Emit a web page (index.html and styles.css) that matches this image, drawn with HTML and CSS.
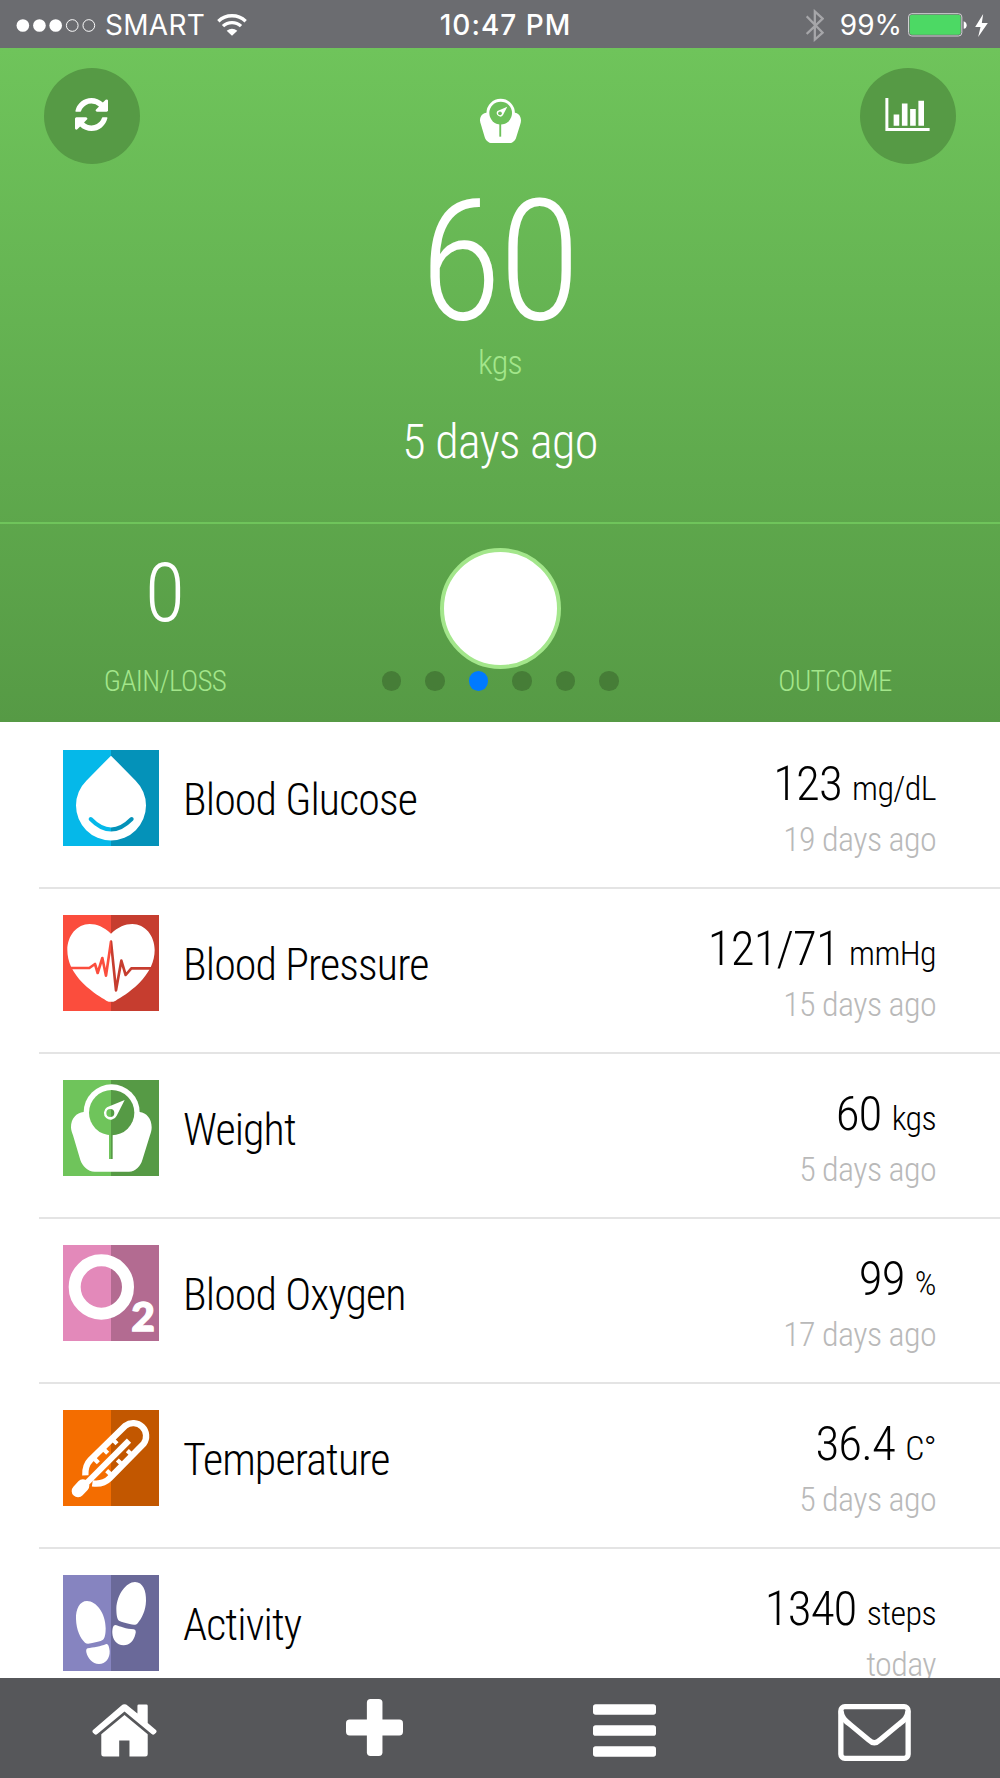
FILE: index.html
```html
<!DOCTYPE html>
<html lang="en">
<head>
    <meta charset="UTF-8">
    <meta name="viewport" content="width=device-width, initial-scale=1.0">
    <title>Health Dashboard</title>
    <link rel="stylesheet" href="styles.css">
</head>
<body>
    <!-- Status bar -->
    <div class="status-bar">
        <div class="status-left">
            <svg class="signal" viewBox="0 0 244 40">
                <g fill="#fff"><circle cx="20" cy="20" r="19.5"/><circle cx="71" cy="20" r="19.5"/><circle cx="121" cy="20" r="19.5"/></g>
                <g fill="none" stroke="#fff" stroke-width="3"><circle cx="172" cy="20" r="18"/><circle cx="223" cy="20" r="18"/></g>
            </svg>
            <span class="carrier">SMART</span>
            <svg class="wifi" viewBox="0 0 90 65">
                <g fill="none" stroke="#fff" stroke-width="10">
                    <path d="M4 21A60 60 0 0 1 86 21"/>
                    <path d="M18 36A39 39 0 0 1 72 36"/>
                </g>
                <path d="M45 65L29 50Q45 38 61 50Z" fill="#fff"/>
            </svg>
        </div>
        <div class="clock">10:47 PM</div>
        <div class="status-right">
            <svg class="bluetooth" viewBox="0 0 55 98"><path d="M2 21L51 71L27 92V6L51 28L2 75" fill="none" stroke="#a6a6a9" stroke-width="7"/></svg>
            <span class="charge">99%</span>
            <svg class="battery" viewBox="0 0 177 71">
                <rect x="1.5" y="1.5" width="160" height="67" rx="10" fill="none" stroke="#d0d0d2" stroke-width="3"/>
                <rect x="5" y="5" width="153" height="60" rx="7" fill="#4cd964"/>
                <path d="M167 24Q176 27 176 36T167 47Z" fill="#fff"/>
            </svg>
            <svg class="bolt" viewBox="0 0 38 69"><path d="M24 0L0 39H16L9 69L38 27H20Z" fill="#fff"/></svg>
        </div>
    </div>

    <!-- Current reading -->
    <div class="hero">
        <div class="hero-main">
            <button class="round-button">
                <svg class="refresh" viewBox="0 0 1536 1536"><path fill="#fff" d="M1511 928q0 5-1 7-64 268-268 434.5t-478 166.5q-146 0-282.5-55t-243.5-157l-129 129q-19 19-45 19t-45-19-19-45v-448q0-26 19-45t45-19h448q26 0 45 19t19 45-19 45l-137 137q71 66 161 102t187 36q134 0 250-65t186-179q11-17 53-117 8-23 30-23h192q13 0 22.5 9.5t9.5 22.5zm25-800v448q0 26-19 45t-45 19h-448q-26 0-45-19t-19-45 19-45l138-138q-148-137-349-137-134 0-250 65t-186 179q-11 17-53 117-8 23-30 23h-199q-13 0-22.5-9.5t-9.5-22.5v-7q65-268 270-434.5t480-166.5q146 0 284 55.5t245 156.5l130-129q19-19 45-19t45 19 19 45z"/></svg>
            </button>
            <div class="reading">
                <svg class="scale" viewBox="24 13 242 263">
                    <path fill="#fff" d="M62 96C40 98 24 116 24 142C24 150 27 158 30 166L52 240C58 258 74 275 95 275H198C218 275 233 258 238 240L261 166C264 158 266 150 266 142C266 116 250 98 230 96Z"/>
                    <circle cx="146" cy="97" r="84" fill="#fff"/>
                    <circle cx="146" cy="98" r="67" fill="#6dc05a"/>
                    <path fill="#6dc05a" d="M138 160h11v77h-11z"/>
                    <path fill="#fff" d="M185 60L127 86A20 20 0 1 0 160 109Z"/>
                    <circle cx="142" cy="99" r="11" fill="#6dc05a"/>
                </svg>
                <div class="reading-value">60</div>
                <div class="reading-unit">kgs</div>
                <div class="reading-date">5 days ago</div>
            </div>
            <button class="round-button">
                <svg class="chart" viewBox="0 0 134 100"><path fill="#fff" d="M0 0h9v91h125v9H0zM25 50h17v34H25zM50 17h17v67H50zM75 33h17v51H75zM100 8h17v76h-17z"/></svg>
            </button>
        </div>
        <div class="hero-stats">
            <div class="stat">
                <div class="stat-value">0</div>
                <div class="stat-label">GAIN/LOSS</div>
            </div>
            <div class="stat-center">
                <div class="knob"></div>
                <div class="dots">
                    <span class="dot"></span>
                    <span class="dot"></span>
                    <span class="dot active"></span>
                    <span class="dot"></span>
                    <span class="dot"></span>
                    <span class="dot"></span>
                </div>
            </div>
            <div class="stat">
                <div class="stat-value"></div>
                <div class="stat-label">OUTCOME</div>
            </div>
        </div>
    </div>

    <!-- Measurements -->
    <div class="list">
        <div class="row">
            <svg class="row-icon" viewBox="0 0 288 288">
                <linearGradient id="blue" gradientUnits="userSpaceOnUse" x1="0" x2="288" y1="0" y2="0"><stop offset=".5" stop-color="#05b8e9"/><stop offset=".5" stop-color="#0492b9"/></linearGradient>
                <rect width="288" height="288" fill="url(#blue)"/>
                <path fill="#fff" d="M144 17L218 92A105 105 0 1 1 70 92Z"/>
                <path fill="none" stroke="url(#blue)" stroke-width="12" stroke-linecap="round" d="M83 207Q144 270 206 207"/>
            </svg>
            <div class="row-name">Blood Glucose</div>
            <div class="row-data">
                <div class="row-value">123 <span class="unit">mg/dL</span></div>
                <div class="row-date">19 days ago</div>
            </div>
        </div>
        <div class="row">
            <svg class="row-icon" viewBox="0 0 288 288">
                <linearGradient id="red" gradientUnits="userSpaceOnUse" x1="0" x2="288" y1="0" y2="0"><stop offset=".5" stop-color="#fb4d3d"/><stop offset=".5" stop-color="#c63d2f"/></linearGradient>
                <rect width="288" height="288" fill="url(#red)"/>
                <path fill="#fff" d="M144 56C122 36 102 27 80 27C42 27 13 62 13 105C13 140 28 172 60 205C90 234 115 248 130 257Q144 264 158 257C173 248 198 234 228 205C260 172 275 140 275 105C275 62 246 27 208 27C186 27 166 36 144 56Z"/>
                <path fill="none" stroke="url(#red)" stroke-width="8" stroke-linejoin="round" d="M22 159H79L96 147L104 174L118 129L129 182L144 80L159 226L175 137L188 180L205 160H264"/>
            </svg>
            <div class="row-name">Blood Pressure</div>
            <div class="row-data">
                <div class="row-value">121/71 <span class="unit">mmHg</span></div>
                <div class="row-date">15 days ago</div>
            </div>
        </div>
        <div class="row">
            <svg class="row-icon" viewBox="0 0 288 288">
                <linearGradient id="green" gradientUnits="userSpaceOnUse" x1="0" x2="288" y1="0" y2="0"><stop offset=".5" stop-color="#6fc45b"/><stop offset=".5" stop-color="#569a45"/></linearGradient>
                <rect width="288" height="288" fill="url(#green)"/>
                <path fill="#fff" d="M62 96C40 98 24 116 24 142C24 150 27 158 30 166L52 240C58 258 74 275 95 275H198C218 275 233 258 238 240L261 166C264 158 266 150 266 142C266 116 250 98 230 96Z"/>
                <circle cx="146" cy="97" r="84" fill="#fff"/>
                <circle cx="146" cy="98" r="68" fill="url(#green)"/>
                <path fill="url(#green)" d="M138 160h11v77h-11z"/>
                <path fill="#fff" d="M185 60L132 82A20 20 0 1 0 161 107Z"/>
                <circle cx="142" cy="99" r="12" fill="url(#green)"/>
            </svg>
            <div class="row-name">Weight</div>
            <div class="row-data">
                <div class="row-value">60 <span class="unit">kgs</span></div>
                <div class="row-date">5 days ago</div>
            </div>
        </div>
        <div class="row">
            <svg class="row-icon" viewBox="0 0 288 288">
                <path fill="#e389ba" d="M0 0h144v288H0z"/>
                <path fill="#b36b91" d="M144 0h144v288H144z"/>
                <circle cx="115" cy="126" r="80" fill="none" stroke="#fff" stroke-width="36"/>
                <text class="o2-digit" x="205" y="259">2</text>
            </svg>
            <div class="row-name">Blood Oxygen</div>
            <div class="row-data">
                <div class="row-value">99 <span class="unit">%</span></div>
                <div class="row-date">17 days ago</div>
            </div>
        </div>
        <div class="row">
            <svg class="row-icon" viewBox="0 0 288 288">
                <path fill="#f46d00" d="M0 0h144v288H0z"/>
                <path fill="#c25700" d="M144 0h144v288H144z"/>
                <g fill="none" stroke="#fff">
                    <path stroke-width="19" d="M67 196C66 172 72 160 82 150L187 47A39 39 0 0 1 242 101L140 205C125 220 108 223 88 220"/>
                    <path stroke-width="13" d="M91 143L106 158M119 115L134 130M147 86L162 101M147 197L131 182M179 165L163 150M209 137L193 122"/>
                    <path stroke-width="18" d="M50 240L198 92"/>
                    <path stroke-width="38" stroke-linecap="round" d="M45 243L60 227"/>
                </g>
            </svg>
            <div class="row-name">Temperature</div>
            <div class="row-data">
                <div class="row-value">36.4 <span class="unit">C°</span></div>
                <div class="row-date">5 days ago</div>
            </div>
        </div>
        <div class="row">
            <svg class="row-icon" viewBox="0 0 288 288">
                <path fill="#8684c0" d="M0 0h144v288H0z"/>
                <path fill="#6a6999" d="M144 0h144v288H144z"/>
                <g fill="#fff">
                    <path d="M72 78C50 78 38 102 39 132C40 165 52 190 66 203C70 207 76 207 84 205C98 201 112 200 120 194C126 190 128 175 128 160C128 115 100 78 72 78Z"/>
                    <path d="M74 220C90 218 115 214 128 208C135 205 138 212 140 228C141 250 128 267 108 267C88 267 74 250 70 232C69 225 70 221 74 220Z"/>
                    <path d="M216 21C240 21 250 48 249 78C248 108 236 130 224 145C219 151 210 150 200 147C188 143 176 142 168 137C162 133 160 118 160 100C162 58 190 21 216 21Z"/>
                    <path d="M158 150C170 154 190 162 212 163C218 164 220 170 217 178C212 198 200 211 182 211C160 210 149 194 148 175C148 160 150 150 158 150Z"/>
                </g>
            </svg>
            <div class="row-name">Activity</div>
            <div class="row-data">
                <div class="row-value">1340 <span class="unit">steps</span></div>
                <div class="row-date">today</div>
            </div>
        </div>
    </div>

    <!-- Tab bar -->
    <div class="tab-bar">
        <div class="tab">
            <svg class="icon-home" viewBox="0 0 196 159">
                <path fill="#fff" d="M137 5Q137 1 141 1H164Q168 1 168 5V57L192 77Q197 81 193 86L188 91Q184 94 180 90L98 22L16 90Q12 94 8 91L3 86Q-1 81 4 77L88 5Q98-4 108 5L137 28Z"/>
                <path fill="#fff" d="M98 33L168 91V151Q168 158 161 158H113V110H82V158H35Q28 158 28 151V91Z"/>
            </svg>
        </div>
        <div class="tab">
            <svg class="icon-plus" viewBox="0 0 172 172"><g fill="#fff"><rect x="63" width="47" height="172" rx="11"/><rect y="62" width="172" height="48" rx="11"/></g></svg>
        </div>
        <div class="tab">
            <svg class="icon-menu" viewBox="0 0 188 158"><g fill="#fff"><rect y="1" width="188" height="31" rx="8"/><rect y="63" width="188" height="32" rx="8"/><rect y="126" width="188" height="31" rx="8"/></g></svg>
        </div>
        <div class="tab">
            <svg class="icon-mail" viewBox="0 0 219 172"><g fill="none" stroke="#fff" stroke-width="16"><rect x="8" y="8" width="203" height="156" rx="12"/><path d="M9 22C9 42 24 53 36 62L93 109Q109 125 125 109L182 62C195 52 210 42 210 22"/></g></svg>
        </div>
    </div>
</body>
</html>
```
FILE: styles.css
```css
* {
    margin: 0;
    padding: 0;
    box-sizing: border-box;
}

body {
    font-family: 'Roboto Condensed', 'Roboto', sans-serif;
    font-weight: 300;
    font-stretch: 75%;
    width: 1000px;
    height: 1778px;
    display: flex;
    flex-direction: column;
    overflow: hidden;
    background: #fff;
    color: #000;
}

svg {
    display: block;
    flex: none;
}

/* Status bar */
.status-bar {
    height: 48px;
    flex: none;
    display: grid;
    grid-template-columns: 1fr auto 1fr;
    align-items: center;
    padding: 2px 12px 0 15px;
    background: #6b6c70;
    color: #fff;
    font-family: 'Inter', sans-serif;
    font-size: 28px;
    font-weight: 400;
    font-stretch: normal;
}

.status-left,
.status-right {
    display: flex;
    align-items: center;
}

.status-right {
    justify-content: flex-end;
}

.signal {
    width: 82px;
    height: 13px;
}

.carrier {
    margin: 0 12px 0 8px;
    letter-spacing: 0.3px;
}

.wifi {
    width: 30px;
    height: 22px;
}

.clock {
    margin-left: 8px;
    font-weight: 550;
    letter-spacing: 1px;
}

.bluetooth {
    width: 18px;
    height: 33px;
}

.charge {
    margin: 0 6px 0 16px;
}

.battery {
    width: 59px;
    height: 24px;
}

.bolt {
    width: 13px;
    height: 23px;
    margin-left: 8px;
}

/* Hero */
.hero {
    height: 674px;
    flex: none;
    background: linear-gradient(#6fc45b, #569a45);
    color: #fff;
}

.hero-main {
    height: 474px;
    display: flex;
    justify-content: space-between;
    padding: 20px 44px 0;
}

.round-button {
    width: 96px;
    height: 96px;
    display: flex;
    align-items: center;
    justify-content: center;
    border: none;
    border-radius: 50%;
    background: #569a45;
}

.refresh {
    width: 33px;
    height: 33px;
    margin: -3px 2px 0 0;
}

.chart {
    width: 45px;
    height: 33px;
    margin: -3px 2px 0 0;
}

.reading {
    display: flex;
    flex-direction: column;
    align-items: center;
    padding-top: 30px;
}

.scale {
    width: 41px;
    height: 46px;
}

.reading-value {
    margin-top: 37px;
    padding-right: 3px;
    font-size: 169px;
    font-weight: 350;
    line-height: 160px;
    letter-spacing: -0.02em;
}

.reading-unit {
    color: #a3e68b;
    font-size: 34px;
    line-height: 40px;
    margin-top: 1px;
    letter-spacing: -0.02em;
}

.reading-date {
    font-size: 48px;
    line-height: 56px;
    margin-top: 32px;
    letter-spacing: -0.013em;
}

.hero-stats {
    height: 200px;
    display: grid;
    grid-template-columns: 330px 1fr 330px;
    border-top: 2px solid #6fc45b;
}

.stat {
    text-align: center;
    padding-top: 21px;
}

.stat-value {
    height: 96px;
    font-size: 82px;
    line-height: 96px;
}

.stat-label {
    margin-top: 23px;
    color: #a3e68b;
    font-size: 29px;
    line-height: 34px;
    letter-spacing: -0.022em;
}

.stat-center {
    display: flex;
    flex-direction: column;
    align-items: center;
    padding-top: 24px;
}

.knob {
    width: 121px;
    height: 121px;
    border: 4.5px solid #a3e68b;
    border-radius: 50%;
    background: #fff;
}

.dots {
    display: flex;
    gap: 24px;
    margin-top: 2px;
}

.dot {
    width: 19.5px;
    height: 19.5px;
    border-radius: 50%;
    background: #467d37;
}

.dot.active {
    background: #007aff;
}

/* List */
.list {
    flex: 1;
    overflow: hidden;
    padding: 2px 0 0 39px;
}

.row {
    height: 165px;
    display: flex;
    align-items: flex-start;
    padding: 26px 64px 0 24px;
    border-bottom: 2px solid #e4e4e4;
}

.row-icon {
    width: 96px;
    height: 96px;
}

.row-name {
    flex: 1;
    margin-left: 24px;
    font-size: 44px;
    line-height: 100px;
    letter-spacing: -0.02em;
}

.row-data {
    text-align: right;
    letter-spacing: -0.9px;
}

.row-value {
    font-size: 49px;
    line-height: 67px;
}

.unit {
    font-size: 34px;
    letter-spacing: -0.6px;
}

.row-date {
    color: #b9b9b9;
    font-size: 34px;
    line-height: 34px;
    letter-spacing: -0.6px;
}

.o2-digit {
    font-family: 'Lato', sans-serif;
    font-size: 122px;
    font-weight: 900;
    fill: #fff;
    stroke: #fff;
    stroke-width: 4px;
}

/* Tab bar */
.tab-bar {
    height: 100px;
    flex: none;
    display: flex;
    padding-right: 1px;
    background: #56575a;
}

.tab {
    flex: 1;
    display: flex;
    justify-content: center;
    align-items: flex-start;
    padding-top: 26px;
}

.icon-home {
    width: 65px;
    height: 53px;
}

.icon-plus {
    width: 57px;
    height: 57px;
    margin-top: -5px;
}

.icon-menu {
    width: 63px;
    height: 53px;
}

.icon-mail {
    width: 73px;
    height: 57px;
}
```
